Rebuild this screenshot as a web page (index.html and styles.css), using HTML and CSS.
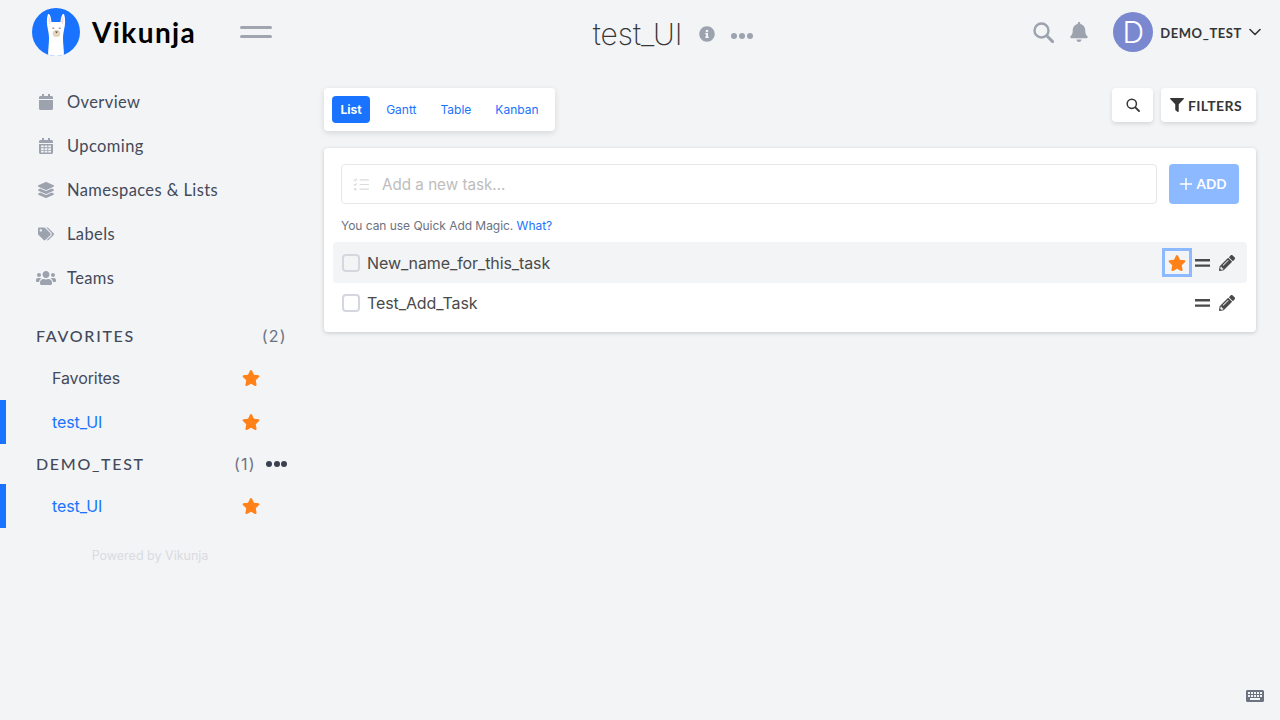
FILE: index.html
```html
<!DOCTYPE html>
<html lang="en">
<head>
    <meta charset="UTF-8">
    <meta name="viewport" content="width=device-width, initial-scale=1.0">
    <title>test_UI - Vikunja</title>
    <link rel="stylesheet" href="styles.css">
</head>
<body>
    <svg class="sprites" xmlns="http://www.w3.org/2000/svg">
        <symbol id="i-star" viewBox="0 0 576 512"><path fill="currentColor" d="M259.3 17.8L194 150.2 47.9 171.5c-26.2 3.8-36.7 36.1-17.7 54.6l105.7 103-25 145.5c-4.5 26.3 23.2 46 46.4 33.7L288 439.6l130.7 68.7c23.2 12.2 50.9-7.4 46.4-33.7l-25-145.5 105.7-103c19-18.5 8.5-50.8-17.7-54.6L382 150.2 316.7 17.8c-11.7-23.6-45.6-23.9-57.4 0z"/></symbol>
        <symbol id="i-pencil" viewBox="0 0 512 512"><path fill="currentColor" d="M497.9 142.1l-46.1 46.1c-4.7 4.7-12.3 4.7-17 0l-111-111c-4.7-4.7-4.7-12.3 0-17l46.1-46.1c18.7-18.7 49.1-18.7 67.9 0l60.1 60.1c18.8 18.7 18.8 49.1 0 67.9zM284.2 99.8L21.6 362.4.4 483.9c-2.9 16.4 11.4 30.6 27.8 27.8l121.5-21.3 262.6-262.6c4.7-4.7 4.7-12.3 0-17l-111-111c-4.8-4.7-12.4-4.7-17.1 0zM124.1 339.9c-5.5-5.5-5.5-14.3 0-19.8l154-154c5.5-5.5 14.3-5.5 19.8 0s5.5 14.3 0 19.8l-154 154c-5.5 5.5-14.3 5.5-19.8 0zM88 424h48v36.3l-64.5 11.3-31.1-31.1L51.7 376H88v48z"/></symbol>
        <symbol id="i-equals" viewBox="0 0 15 8"><path fill="currentColor" d="M0 0h15v2.4H0zM0 5.4h15v2.4H0z"/></symbol>
    </svg>

    <header class="topbar">
        <div class="brand">
            <svg class="logo" viewBox="0 0 48 48">
                <defs><clipPath id="logo-clip"><circle cx="24" cy="24" r="24"/></clipPath></defs>
                <circle cx="24" cy="24" r="24" fill="#1973ff"/>
                <g clip-path="url(#logo-clip)">
                    <path fill="#fff" d="M16 22c-1.500-6-1.500-12 0-16 1.500-.5 3 2 3.500 8h9c.5-6 2-8.500 3.500-8 1.500 4 1.500 10 0 16-.5 3-1 5-1 8 0 6 1 12 1 18H16c0-6 1-12 1-18 0-3-.5-5-1-8z"/>
                    <path fill="#f5dcd8" d="M17.200 16c-.8-3-.8-6-.2-8 .8.500 1.400 3 1.500 7zM30.800 16c.8-3 .8-6 .2-8-.8.500-1.400 3-1.500 7z"/>
                    <ellipse cx="24.500" cy="25.500" rx="3.800" ry="3.600" fill="#e3d5bd"/>
                    <path fill="#4a4038" d="M23 23.600h3l-1.500 1.600zM20.300 19.800h2v.8h-2zM26.700 19.800h2v.8h-2z"/>
                </g>
            </svg>
            <span class="brand-name">Vikunja</span>
            <span class="menu-toggle"><i></i><i></i></span>
        </div>

        <div class="title-group">
            <h1 class="page-title">test_UI</h1>
            <svg class="title-info" viewBox="0 0 512 512"><path fill="currentColor" d="M256 8C119.043 8 8 119.083 8 256c0 136.997 111.043 248 248 248s248-111.003 248-248C504 119.083 392.957 8 256 8zm0 110c23.196 0 42 18.804 42 42s-18.804 42-42 42-42-18.804-42-42 18.804-42 42-42zm56 254c0 6.627-5.373 12-12 12h-88c-6.627 0-12-5.373-12-12v-24c0-6.627 5.373-12 12-12h12v-64h-12c-6.627 0-12-5.373-12-12v-24c0-6.627 5.373-12 12-12h64c6.627 0 12 5.373 12 12v100h12c6.627 0 12 5.373 12 12v24z"/></svg>
            <span class="dots dots-light"><i></i><i></i><i></i></span>
        </div>

        <div class="user-area">
            <svg class="top-search" viewBox="0 0 21 21"><circle cx="8.500" cy="8.500" r="7" fill="none" stroke="currentColor" stroke-width="2.400"/><path d="M13.800 13.800l5.800 5.800" stroke="currentColor" stroke-width="3" stroke-linecap="round"/></svg>
            <svg class="top-bell" viewBox="0 0 448 512"><path fill="currentColor" d="M224 512c35.32 0 63.97-28.65 63.97-64H160.030c0 35.35 28.65 64 63.97 64zm215.39-149.71c-19.32-20.76-55.47-51.99-55.47-154.29 0-77.7-54.48-139.9-127.94-155.16V32c0-17.67-14.32-32-31.98-32s-31.98 14.33-31.98 32v20.84C118.56 68.1 64.08 130.3 64.08 208c0 102.3-36.15 133.53-55.47 154.29-6 6.45-8.66 14.16-8.61 21.71.11 16.4 12.98 32 32.1 32h383.8c19.12 0 32-15.6 32.1-32 .05-7.55-2.61-15.27-8.61-21.71z"/></svg>
            <span class="avatar">D</span>
            <span class="user-name">DEMO_TEST</span>
            <svg class="chevron" viewBox="0 0 12 8"><path d="M1 1.500l5 5 5-5" fill="none" stroke="currentColor" stroke-width="1.600" stroke-linecap="round" stroke-linejoin="round"/></svg>
        </div>
    </header>

    <div class="layout">
        <aside class="sidebar">
            <nav class="main-nav">
                <a class="nav-link">
                    <svg class="nav-icon" viewBox="0 0 448 512"><path fill="currentColor" d="M12 192h424c6.6 0 12 5.4 12 12v260c0 26.5-21.5 48-48 48H48c-26.500 0-48-21.500-48-48V204c0-6.600 5.400-12 12-12zm436-44v-36c0-26.500-21.500-48-48-48h-48V12c0-6.600-5.400-12-12-12h-40c-6.600 0-12 5.400-12 12v52H160V12c0-6.600-5.400-12-12-12h-40c-6.600 0-12 5.400-12 12v52H48C21.500 64 0 85.500 0 112v36c0 6.600 5.400 12 12 12h424c6.600 0 12-5.400 12-12z"/></svg>
                    Overview
                </a>
                <a class="nav-link">
                    <svg class="nav-icon" viewBox="0 0 448 512"><path fill="currentColor" fill-rule="evenodd" d="M448 148v-36c0-26.500-21.500-48-48-48h-48V12c0-6.600-5.400-12-12-12h-40c-6.600 0-12 5.400-12 12v52H160V12c0-6.600-5.400-12-12-12h-40c-6.600 0-12 5.400-12 12v52H48C21.500 64 0 85.500 0 112v36c0 6.600 5.400 12 12 12h424c6.600 0 12-5.400 12-12zM12 192h424c6.600 0 12 5.400 12 12v260c0 26.500-21.500 48-48 48H48c-26.500 0-48-21.500-48-48V204c0-6.600 5.400-12 12-12zM64 240v56h88v-56zM180 240v56h88v-56zM296 240v56h88v-56zM64 324v56h88v-56zM180 324v56h88v-56zM296 324v56h88v-56zM64 408v56h88v-56zM180 408v56h88v-56zM296 408v56h88v-56z"/></svg>
                    Upcoming
                </a>
                <a class="nav-link">
                    <svg class="nav-icon" viewBox="0 0 512 512"><path fill="currentColor" d="M12.41 148.02l232.94 105.67c6.8 3.09 14.49 3.09 21.29 0l232.94-105.67c16.55-7.51 16.55-32.52 0-40.03L266.65 2.31a25.607 25.607 0 0 0-21.29 0L12.41 107.98c-16.55 7.51-16.55 32.53 0 40.04zm487.18 88.28l-58.09-26.33-161.64 73.27c-7.56 3.43-15.59 5.17-23.86 5.17s-16.29-1.74-23.86-5.17L70.51 209.97l-58.1 26.33c-16.55 7.5-16.55 32.5 0 40l232.94 105.59c6.8 3.08 14.49 3.08 21.29 0L499.59 276.3c16.55-7.5 16.55-32.5 0-40zm0 127.8l-57.87-26.23-161.86 73.37c-7.56 3.43-15.59 5.17-23.86 5.17s-16.29-1.74-23.86-5.17L70.29 337.87 12.41 364.1c-16.55 7.5-16.55 32.5 0 40l232.94 105.59c6.8 3.08 14.49 3.08 21.29 0L499.59 404.1c16.55-7.5 16.55-32.5 0-40z"/></svg>
                    Namespaces &amp; Lists
                </a>
                <a class="nav-link">
                    <svg class="nav-icon" viewBox="0 0 640 512"><path fill="currentColor" d="M497.941 225.941L286.059 14.059A48 48 0 0 0 252.118 0H48C21.49 0 0 21.49 0 48v204.118a48 48 0 0 0 14.059 33.941l211.882 211.882c18.744 18.745 49.136 18.746 67.882 0l204.118-204.118c18.745-18.745 18.745-49.137 0-67.882zM112 160c-26.51 0-48-21.49-48-48s21.49-48 48-48 48 21.49 48 48-21.49 48-48 48zm513.941 133.823L421.823 497.941c-18.745 18.745-49.137 18.745-67.882 0l-.36-.36L527.64 323.522c16.999-16.999 26.36-39.6 26.36-63.64s-9.362-46.641-26.36-63.64L331.397 0h48.721a48 48 0 0 1 33.941 14.059l211.882 211.882c18.745 18.745 18.745 49.137 0 67.882z"/></svg>
                    Labels
                </a>
                <a class="nav-link">
                    <svg class="nav-icon nav-icon-wide" viewBox="0 0 640 512"><path fill="currentColor" d="M96 224c35.3 0 64-28.7 64-64s-28.7-64-64-64-64 28.7-64 64 28.7 64 64 64zm448 0c35.3 0 64-28.7 64-64s-28.7-64-64-64-64 28.7-64 64 28.7 64 64 64zm32 32h-64c-17.6 0-33.5 7.1-45.1 18.6 40.3 22.1 68.9 62 75.1 109.4h66c17.7 0 32-14.3 32-32v-32c0-35.3-28.7-64-64-64zm-256 0c61.9 0 112-50.1 112-112S381.9 32 320 32 208 82.1 208 144s50.1 112 112 112zm76.8 32h-8.3c-20.8 10-43.9 16-68.5 16s-47.6-6-68.5-16h-8.3C179.6 288 128 339.6 128 403.2V432c0 26.5 21.5 48 48 48h288c26.5 0 48-21.5 48-48v-28.8c0-63.6-51.6-115.2-115.2-115.2zm-223.7-13.4C161.5 263.1 145.6 256 128 256H64c-35.3 0-64 28.7-64 64v32c0 17.7 14.3 32 32 32h65.9c6.3-47.4 34.9-87.3 75.2-109.4z"/></svg>
                    Teams
                </a>
            </nav>

            <div class="ns-head">
                <span class="ns-name">FAVORITES</span>
                <span class="ns-count">(2)</span>
            </div>
            <a class="list-link">
                <span class="list-name">Favorites</span>
                <svg class="star"><use href="#i-star"/></svg>
            </a>
            <a class="list-link is-active">
                <span class="list-name">test_UI</span>
                <svg class="star"><use href="#i-star"/></svg>
            </a>

            <div class="ns-head">
                <span class="ns-name">DEMO_TEST</span>
                <span class="ns-count">(1)</span>
                <span class="dots dots-dark"><i></i><i></i><i></i></span>
            </div>
            <a class="list-link is-active">
                <span class="list-name">test_UI</span>
                <svg class="star"><use href="#i-star"/></svg>
            </a>

            <p class="powered">Powered by Vikunja</p>
        </aside>

        <main class="content">
            <div class="toolbar">
                <div class="view-tabs">
                    <a class="tab is-current">List</a>
                    <a class="tab">Gantt</a>
                    <a class="tab">Table</a>
                    <a class="tab">Kanban</a>
                </div>
                <div class="toolbar-actions">
                    <button class="tool-btn tool-search">
                        <svg class="tool-search-icon" viewBox="0 0 14 14"><circle cx="5.800" cy="5.800" r="4.600" fill="none" stroke="currentColor" stroke-width="1.500"/><path d="M9.300 9.300l3.700 3.700" stroke="currentColor" stroke-width="1.800" stroke-linecap="round"/></svg>
                    </button>
                    <button class="tool-btn tool-filters">
                        <svg class="filter-icon" viewBox="0 0 512 512"><path fill="currentColor" d="M487.976 0H24.028C2.71 0-8.047 25.866 7.058 40.971L192 225.941V432c0 7.831 3.821 15.17 10.237 19.662l80 55.98C298.02 518.69 320 507.493 320 487.98V225.941l184.947-184.97C520.021 25.896 509.338 0 487.976 0z"/></svg>
                        FILTERS
                    </button>
                </div>
            </div>

            <section class="task-card">
                <div class="add-row">
                    <div class="task-input">
                        <svg class="tasks-icon" viewBox="0 0 18 14"><path fill="none" stroke="currentColor" stroke-width="1.300" d="M7 2h10M7 7h10M7 12h10M.8 1.800l1.200 1.200 2-2.200M.8 6.800l1.200 1.200 2-2.200"/><circle cx="2.200" cy="12" r="1.300" fill="currentColor"/></svg>
                        <span class="placeholder">Add a new task...</span>
                    </div>
                    <button class="add-btn">
                        <svg class="plus-icon" viewBox="0 0 12 12"><path d="M6 0v12M0 6h12" stroke="currentColor" stroke-width="1.400"/></svg>
                        ADD
                    </button>
                </div>
                <p class="quick-help">You can use Quick Add Magic. <a>What?</a></p>

                <ul class="task-list">
                    <li class="task is-hover">
                        <span class="check"></span>
                        <span class="task-text">New_name_for_this_task</span>
                        <span class="star-focus"><svg class="star star-task"><use href="#i-star"/></svg></span>
                        <svg class="equals"><use href="#i-equals"/></svg>
                        <svg class="pencil"><use href="#i-pencil"/></svg>
                    </li>
                    <li class="task">
                        <span class="check"></span>
                        <span class="task-text">Test_Add_Task</span>
                        <svg class="equals"><use href="#i-equals"/></svg>
                        <svg class="pencil"><use href="#i-pencil"/></svg>
                    </li>
                </ul>
            </section>
        </main>
    </div>

    <!-- keyboard shortcuts -->
    <svg class="keyboard" viewBox="0 0 18 12"><path fill="currentColor" fill-rule="evenodd" d="M1.500 0h15A1.500 1.500 0 0 1 18 1.500v9a1.500 1.500 0 0 1-1.500 1.500h-15A1.500 1.500 0 0 1 0 10.500v-9A1.500 1.500 0 0 1 1.500 0zM2 2v2h2V2zM5 2v2h2V2zM8 2v2h2V2zM11 2v2h2V2zM14 2v2h2V2zM2 5v2h2V5zM5 5v2h2V5zM8 5v2h2V5zM11 5v2h2V5zM14 5v2h2V5zM4 8v2h10V8z"/></svg>
</body>
</html>
```

FILE: styles.css
```css
* {
    box-sizing: border-box;
}
body {
    margin: 0;
    height: 720px;
    overflow: hidden;
    background: #f3f4f6;
    color: #363636;
    font-family: Inter, "Liberation Sans", sans-serif;
    font-size: 16px;
}
.sprites {
    display: none;
}

/* Top bar */
.topbar {
    display: flex;
    align-items: center;
    height: 64px;
    padding-right: 19px;
}
.brand {
    display: flex;
    align-items: center;
    width: 312px;
    padding-left: 32px;
}
.logo {
    width: 48px;
    height: 48px;
}
.brand-name {
    margin-left: 12px;
    font-family: Lato, sans-serif;
    font-size: 28px;
    font-weight: 700;
    letter-spacing: 1.4px;
    color: #000;
}
.menu-toggle {
    display: flex;
    flex-direction: column;
    gap: 6px;
    width: 32px;
    margin-left: 44px;
}
.menu-toggle i {
    display: block;
    height: 3px;
    border-radius: 3px;
    background: #a0a5b1;
}
.title-group {
    flex: 1;
    display: flex;
    align-items: center;
    justify-content: center;
    padding-top: 4px;
}
.page-title {
    margin: 0;
    font-size: 30px;
    font-weight: 200;
    line-height: 36px;
    color: #363636;
}
.title-info {
    width: 16px;
    height: 16px;
    margin-left: 16px;
    color: #9ca3af;
}
.dots {
    display: flex;
}
.dots i {
    display: block;
    border-radius: 50%;
}
.dots-light {
    gap: 2px;
    margin-left: 16px;
    padding-top: 3px;
}
.dots-light i {
    width: 6px;
    height: 6px;
    background: #9ca3af;
}
.user-area {
    display: flex;
    align-items: center;
}
.top-search {
    width: 21px;
    height: 21px;
    color: #9ca3af;
}
.top-bell {
    width: 18px;
    height: 20px;
    margin-left: 16px;
    color: #9ca3af;
}
.avatar {
    width: 40px;
    height: 40px;
    margin-left: 25px;
    border-radius: 50%;
    background: #7a88d0;
    color: #fff;
    font-size: 30px;
    font-weight: 300;
    line-height: 40px;
    text-align: center;
}
.user-name {
    margin-left: 7px;
    padding-top: 1px;
    font-family: Lato, sans-serif;
    font-size: 13px;
    font-weight: 700;
    letter-spacing: 0.6px;
    color: #363636;
}
.chevron {
    width: 12px;
    height: 8px;
    margin-left: 7px;
    color: #363636;
}

/* Columns */
.layout {
    display: flex;
}
.sidebar {
    width: 324px;
    flex-shrink: 0;
    padding-top: 16px;
}
.content {
    flex: 1;
    padding: 24px 24px 0 0;
}

/* Sidebar */
.main-nav {
    margin-bottom: 16px;
}
.nav-link {
    display: flex;
    align-items: center;
    height: 44px;
    padding-left: 38px;
    font-family: Lato, sans-serif;
    font-size: 16.500px;
    letter-spacing: 0.4px;
    color: #434a5a;
}
.nav-icon {
    width: 16px;
    height: 16px;
    margin-right: 13px;
    color: #9ca3af;
}
.nav-icon-wide {
    width: 20px;
    margin-left: -2px;
    margin-right: 11px;
}
.ns-head {
    display: flex;
    align-items: center;
    width: 287px;
    height: 40px;
    padding-left: 36px;
}
.ns-name {
    flex: 1;
    padding-bottom: 2px;
    font-family: Lato, sans-serif;
    font-size: 16px;
    font-weight: 500;
    letter-spacing: 1.7px;
    color: #434a5a;
}
.ns-count {
    color: #6b7280;
    letter-spacing: 1.3px;
}
.dots-dark {
    gap: 1.500px;
    margin-left: 10px;
}
.dots-dark i {
    width: 6px;
    height: 6px;
    background: #3a4050;
}
.list-link {
    display: flex;
    align-items: center;
    height: 44px;
    padding-left: 52px;
    letter-spacing: -0.1px;
    color: #434a5a;
}
.list-name {
    width: 190px;
}
.list-link.is-active {
    border-left: 6px solid #1973ff;
    padding-left: 46px;
    color: #1973ff;
}
.star {
    width: 18px;
    height: 16px;
    color: #ff8117;
}
.powered {
    width: 300px;
    margin: 20px 0 0;
    font-size: 12.500px;
    text-align: center;
    color: #d9dbe0;
}

/* Toolbar */
.toolbar {
    display: flex;
    justify-content: space-between;
    align-items: flex-start;
    margin-bottom: 17px;
}
.view-tabs {
    display: flex;
    width: 231px;
    height: 43px;
    padding: 8px;
    background: #fff;
    border-radius: 4px;
    box-shadow: 0 2px 6px rgba(0, 0, 0, 0.12);
}
.tab {
    display: flex;
    align-items: center;
    height: 27px;
    padding: 0 8px;
    margin-right: 8px;
    font-size: 12px;
    color: #1973ff;
    border-radius: 4px;
}
.tab.is-current {
    padding: 0 8.500px;
    background: #1973ff;
    color: #fff;
    font-weight: 700;
}
.toolbar-actions {
    display: flex;
    gap: 8px;
}
.tool-btn {
    display: flex;
    align-items: center;
    justify-content: center;
    height: 34px;
    border: none;
    border-radius: 4px;
    background: #fff;
    color: #363636;
    box-shadow: 0 2px 4px rgba(0, 0, 0, 0.12);
}
.tool-search {
    width: 41px;
}
.tool-search-icon {
    width: 14px;
    height: 14px;
}
.tool-filters {
    justify-content: flex-start;
    width: 95px;
    padding: 0 0 0 9px;
    font-family: Lato, sans-serif;
    font-size: 14px;
    font-weight: 700;
    letter-spacing: 0.4px;
}
.filter-icon {
    width: 14px;
    height: 14px;
    margin-right: 4px;
}

/* Task card */
.task-card {
    height: 184px;
    padding: 16px 9px 0;
    background: #fff;
    border-radius: 4px;
    box-shadow: 0 1px 4px rgba(0, 0, 0, 0.18);
}
.add-row {
    display: flex;
    gap: 12px;
    padding: 0 8px;
}
.task-input {
    flex: 1;
    display: flex;
    align-items: center;
    height: 40px;
    padding-left: 11px;
    border: 1px solid #e5e7eb;
    border-radius: 4px;
}
.tasks-icon {
    width: 17px;
    height: 13px;
    color: #dcdcdc;
}
.placeholder {
    margin-left: 12px;
    font-size: 15.200px;
    color: #bdbdbd;
}
.add-btn {
    display: flex;
    align-items: center;
    justify-content: center;
    gap: 5px;
    width: 70px;
    height: 40px;
    padding: 0 2px 0 0;
    border: none;
    border-radius: 4px;
    background: #8cb9ff;
    color: #fff;
    font-family: Lato, sans-serif;
    font-size: 13.500px;
    font-weight: 700;
}
.plus-icon {
    width: 12px;
    height: 12px;
}
.quick-help {
    margin: 14px 8px 8px;
    font-size: 12px;
    line-height: 16px;
    letter-spacing: -0.04px;
    color: #6b7280;
}
.quick-help a {
    color: #1973ff;
}
.task-list {
    margin: 0;
    padding: 0;
    list-style: none;
}
.task {
    display: flex;
    align-items: center;
    height: 40px;
    padding: 0 12px 0 9px;
    letter-spacing: -0.1px;
    color: #4a4a4a;
}
.task.is-hover {
    height: 41px;
    background: #f3f4f6;
    border-radius: 4px;
}
.check {
    width: 18px;
    height: 18px;
    border: 2px solid #d4d7dd;
    border-radius: 4px;
}
.task-text {
    flex: 1;
    margin-left: 7px;
}
.star-focus {
    display: flex;
    align-items: center;
    justify-content: center;
    flex-shrink: 0;
    width: 30px;
    height: 29px;
    margin-right: 3px;
    border: 3px solid #8cb9ff;
}
.equals {
    width: 15px;
    height: 8px;
    margin-right: 9px;
    color: #4a4a4a;
}
.pencil {
    width: 16px;
    height: 16px;
    color: #4a4a4a;
}

/* Keyboard shortcut button, floats over the page */
.keyboard {
    position: fixed;
    right: 16px;
    bottom: 18px;
    width: 18px;
    height: 12px;
    color: #6b7280;
}
```
